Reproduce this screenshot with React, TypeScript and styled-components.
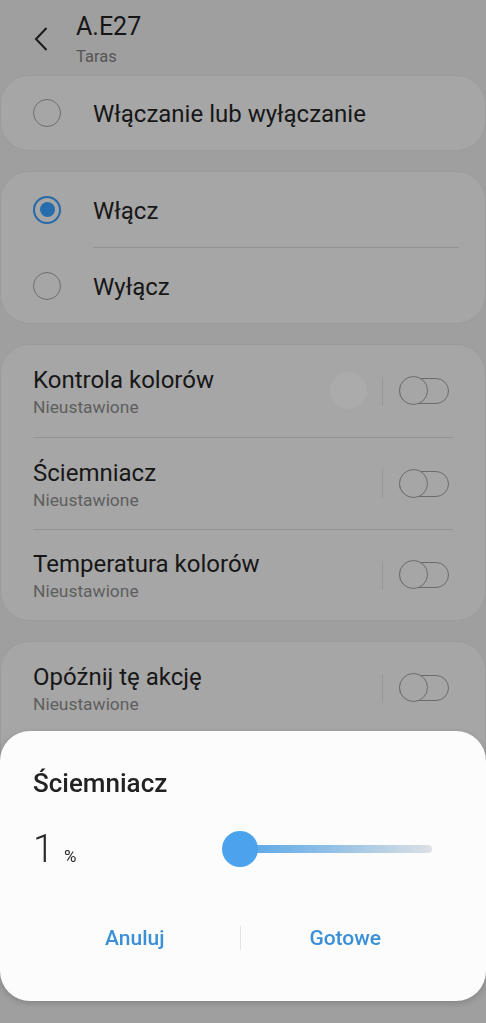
import styled, { createGlobalStyle } from "styled-components";

const GlobalStyle = createGlobalStyle`
  html, body {
    margin: 0;
    padding: 0;
    background: #9f9f9f;
    font-family: Roboto, "Noto Sans", sans-serif;
  }
`;

const Page = styled.div`
  min-height: 1023px;
  background: #9f9f9f;
  display: flex;
  flex-direction: column;
  gap: 22px;
  padding: 0 1px;
  overflow: hidden;
`;

const Header = styled.header`
  height: 76px;
  margin-bottom: -22px;
  display: flex;
  align-items: flex-start;
  padding: 12px 0 0 33px;
  box-sizing: border-box;
`;

const BackButton = styled.button`
  background: transparent;
  border: none;
  padding: 0;
  margin-top: 15px;
  width: 18px;
  height: 26px;
  display: flex;
  color: #1a1a1a;
`;

const TitleBlock = styled.div`
  margin-left: 24px;
  display: flex;
  flex-direction: column;
  gap: 6px;
`;

const Title = styled.div`
  font-size: 25px;
  line-height: 29px;
  color: #161616;
`;

const SubTitle = styled.div`
  font-size: 16.5px;
  line-height: 20px;
  color: #565656;
`;

const Card = styled.section`
  background: #a6a6a6;
  border-radius: 28px;
  display: flex;
  flex-direction: column;
  box-shadow: 0 0 0 1px rgba(0, 0, 0, 0.02);
`;

const RadioRow = styled.div<{ h: number }>`
  height: ${(p) => p.h}px;
  display: flex;
  align-items: center;
  padding-left: 32px;
  gap: 32px;
`;

const Radio = styled.span<{ checked?: boolean }>`
  width: 28px;
  height: 28px;
  box-sizing: border-box;
  border-radius: 50%;
  border: ${(p) => (p.checked ? "2px solid #286aa8" : "1.5px solid #6e6e6e")};
  display: flex;
  align-items: center;
  justify-content: center;
  &::after {
    content: "";
    display: ${(p) => (p.checked ? "block" : "none")};
    width: 15px;
    height: 15px;
    border-radius: 50%;
    background: #266dae;
  }
`;

const RowLabel = styled.span`
  font-size: 24px;
  color: #171717;
  padding-top: 2px;
`;

const Divider = styled.div<{ left: number; right: number }>`
  height: 1px;
  background: #929292;
  margin: 0 ${(p) => p.right}px 0 ${(p) => p.left}px;
`;

const SwitchRow = styled.div<{ h: number }>`
  position: relative;
  height: ${(p) => p.h}px;
  display: flex;
  align-items: center;
  padding: 0 36px 0 32px;
`;

const RowText = styled.div`
  flex: 1;
  display: flex;
  flex-direction: column;
  padding-top: 3px;
`;

const RowTitle = styled.div`
  font-size: 24px;
  line-height: 29px;
  color: #171717;
`;

const RowSub = styled.div`
  font-size: 17.4px;
  line-height: 24px;
  color: #5e5e5e;
`;

const Ripple = styled.span`
  position: absolute;
  left: 329px;
  top: 50%;
  margin-top: -19px;
  width: 37px;
  height: 37px;
  border-radius: 50%;
  background: rgba(255, 255, 255, 0.06);
`;

const VSep = styled.span`
  width: 1px;
  height: 29px;
  background: #979797;
  margin-right: 16px;
`;

const Switch = styled.span`
  position: relative;
  width: 50px;
  height: 26px;
  box-sizing: border-box;
  border: 1.5px solid #6c6c6c;
  border-radius: 13px;
  &::before {
    content: "";
    position: absolute;
    left: -1.5px;
    top: -3px;
    width: 29px;
    height: 29px;
    box-sizing: border-box;
    border-radius: 50%;
    border: 1.5px solid #6c6c6c;
    background: #a6a6a6;
  }
`;

const Sheet = styled.div`
  position: fixed;
  left: 0;
  right: 0;
  bottom: 22px;
  height: 270px;
  box-sizing: border-box;
  background: #fcfcfc;
  border-radius: 30px;
  box-shadow: 0 2px 6px rgba(0, 0, 0, 0.18);
  display: flex;
  flex-direction: column;
  padding: 37px 0 0;
`;

const SheetTitle = styled.div`
  font-size: 26px;
  line-height: 31px;
  font-weight: 500;
  color: #222;
  padding-left: 33px;
`;

const ValueRow = styled.div`
  margin-top: 32px;
  height: 36px;
  display: flex;
  align-items: center;
  justify-content: space-between;
  padding: 0 54px 0 33px;
`;

const Value = styled.div`
  display: flex;
  align-items: baseline;
  gap: 10px;
  color: #2a2a2a;
`;

const Big = styled.span`
  font-size: 38px;
  font-weight: 300;
  line-height: 36px;
`;

const Unit = styled.span`
  font-size: 17px;
`;

const Slider = styled.div`
  position: relative;
  width: 210px;
  height: 36px;
  display: flex;
  align-items: center;
`;

const Track = styled.div`
  margin-left: 18px;
  flex: 1;
  height: 8px;
  border-radius: 4px;
  background: linear-gradient(90deg, #55a6e8 0%, #8fbfe6 45%, #dde0e3 100%);
`;

const Thumb = styled.span`
  position: absolute;
  left: 0;
  top: 0;
  width: 36px;
  height: 36px;
  border-radius: 50%;
  background: #4aa3ec;
`;

const Buttons = styled.div`
  margin-top: 46px;
  height: 50px;
  display: grid;
  grid-template-columns: 1fr 1px 1fr;
  align-items: center;
  padding: 0 36px 0 30px;
`;

const TextButton = styled.button`
  background: transparent;
  border: none;
  font-family: Roboto, "Noto Sans", sans-serif;
  font-size: 21px;
  font-weight: 500;
  color: #3b8fd6;
  padding: 0;
`;

const BtnSep = styled.span`
  height: 24px;
  background: #e4e4e4;
`;

const toggles = [
  { title: "Kontrola kolorów", h: 92, ripple: true },
  { title: "Ściemniacz", h: 91 },
  { title: "Temperatura kolorów", h: 90 },
];

export default function App() {
  return (
    <>
      <GlobalStyle />
      <Page>
        <Header>
          <BackButton aria-label="Wstecz">
            <svg width="14" height="24" viewBox="0 0 14 24" fill="none">
              <path d="M12.5 1 L2 12 L12.5 23" stroke="#1a1a1a" strokeWidth="2" />
            </svg>
          </BackButton>
          <TitleBlock>
            <Title>A.E27</Title>
            <SubTitle>Taras</SubTitle>
          </TitleBlock>
        </Header>

        <Card>
          <RadioRow h={74}>
            <Radio />
            <RowLabel>Włączanie lub wyłączanie</RowLabel>
          </RadioRow>
        </Card>

        <Card>
          <RadioRow h={75}>
            <Radio checked />
            <RowLabel>Włącz</RowLabel>
          </RadioRow>
          <Divider left={92} right={26} />
          <RadioRow h={75}>
            <Radio />
            <RowLabel>Wyłącz</RowLabel>
          </RadioRow>
        </Card>

        <Card>
          {toggles.map((t, i) => (
            <div key={t.title}>
              {i > 0 && <Divider left={32} right={32} />}
              <SwitchRow h={t.h}>
                <RowText>
                  <RowTitle>{t.title}</RowTitle>
                  <RowSub>Nieustawione</RowSub>
                </RowText>
                {t.ripple && <Ripple />}
                <VSep />
                <Switch />
              </SwitchRow>
            </div>
          ))}
        </Card>

        <Card>
          <SwitchRow h={92}>
            <RowText>
              <RowTitle>Opóźnij tę akcję</RowTitle>
              <RowSub>Nieustawione</RowSub>
            </RowText>
            <VSep />
            <Switch />
          </SwitchRow>
          <Divider left={32} right={32} />
          <SwitchRow h={92} />
        </Card>

        <Sheet>
          <SheetTitle>Ściemniacz</SheetTitle>
          <ValueRow>
            <Value>
              <Big>1</Big>
              <Unit>%</Unit>
            </Value>
            <Slider>
              <Track />
              <Thumb />
            </Slider>
          </ValueRow>
          <Buttons>
            <TextButton>Anuluj</TextButton>
            <BtnSep />
            <TextButton>Gotowe</TextButton>
          </Buttons>
        </Sheet>
      </Page>
    </>
  );
}
